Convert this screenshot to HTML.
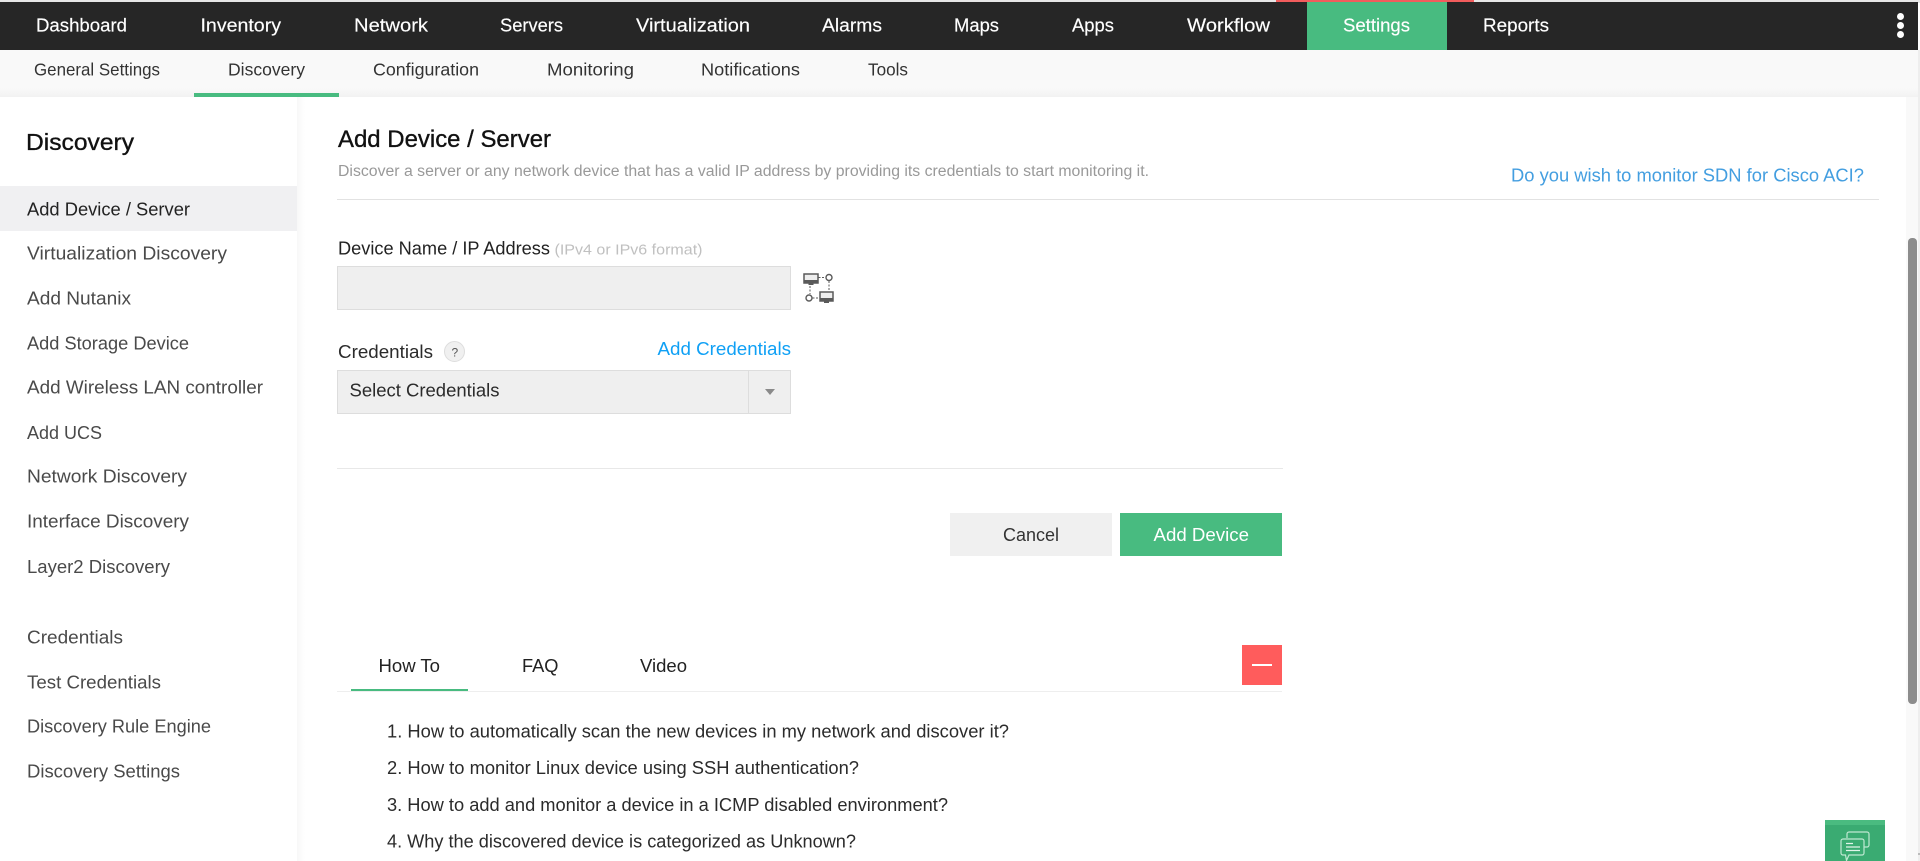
<!DOCTYPE html>
<html lang="en">
<head>
<meta charset="utf-8">
<title>Add Device / Server</title>
<style>
html,body{margin:0;padding:0;width:1920px;height:861px;overflow:hidden;background:#fff;font-family:"Liberation Sans",sans-serif}
.b{position:absolute;box-sizing:border-box}
svg.t{position:absolute;left:0;top:0;z-index:5}
svg.t text{font-family:"Liberation Sans",sans-serif}
.top text{font-size:18px;fill:#fff;stroke:#fff;stroke-width:.15px}
.sub text{font-size:17.5px;fill:#333}
.side text{font-size:18px;fill:#4a4a4a}
.list text{font-size:18px;fill:#2b2b2b}
</style>
</head>
<body>
<!-- top bar -->
<div class="b" style="left:0;top:0;width:1920px;height:3px;background:#e6e6e6"></div>
<div class="b" style="left:1276px;top:0;width:198px;height:3px;background:#f25c5c"></div>
<div class="b" style="left:0;top:2px;width:1918px;height:48px;background:#262626"></div>
<div class="b" style="left:1307px;top:2px;width:140px;height:48px;background:#48bb80"></div>
<div class="b" style="left:1896.5px;top:12.5px;width:7px;height:7px;border-radius:50%;background:#fff"></div>
<div class="b" style="left:1896.5px;top:21.5px;width:7px;height:7px;border-radius:50%;background:#fff"></div>
<div class="b" style="left:1896.5px;top:30.5px;width:7px;height:7px;border-radius:50%;background:#fff"></div>
<!-- sub nav -->
<div class="b" style="left:0;top:50px;width:1918px;height:47px;background:linear-gradient(#f9f9f9 0,#f9f9f9 38px,#f2f2f2 47px)"></div>
<div class="b" style="left:194px;top:93px;width:145px;height:4px;background:#48bb80"></div>
<!-- sidebar -->
<div class="b" style="left:297px;top:97px;width:8px;height:764px;background:linear-gradient(90deg,#f8f8f8,#fff)"></div>
<div class="b" style="left:0;top:186px;width:297px;height:45px;background:#f0f0f2"></div>
<!-- header rule -->
<div class="b" style="left:337px;top:199px;width:1542px;height:1px;background:#e2e2e2"></div>
<!-- device input -->
<div class="b" style="left:337px;top:266px;width:454px;height:44px;background:#efefef;border:1px solid #dddddd"></div>
<!-- select -->
<div class="b" style="left:337px;top:370px;width:454px;height:44px;background:#efefef;border:1px solid #dddddd"></div>
<div class="b" style="left:748px;top:370px;width:1px;height:44px;background:#dddddd"></div>
<div class="b" style="left:765px;top:389px;width:0;height:0;border-left:5.5px solid transparent;border-right:5.5px solid transparent;border-top:6px solid #8a8a8a"></div>
<!-- help circle -->
<div class="b" style="left:444px;top:341px;width:21px;height:21px;border-radius:50%;background:#f0f0f0;border:1px solid #dddddd"></div>
<!-- divider + buttons -->
<div class="b" style="left:337px;top:468px;width:946px;height:1px;background:#e8e8e8"></div>
<div class="b" style="left:950px;top:513px;width:162px;height:43px;background:#f0f0f0"></div>
<div class="b" style="left:1119.5px;top:513px;width:162.5px;height:43px;background:#48bb80"></div>
<!-- tabs -->
<div class="b" style="left:337px;top:691px;width:945px;height:1px;background:#eeeeee"></div>
<div class="b" style="left:351px;top:689px;width:117px;height:2px;background:#48bb80"></div>
<div class="b" style="left:1242px;top:645px;width:40px;height:40px;background:#ff5c5c"></div>
<div class="b" style="left:1252px;top:664px;width:20px;height:2px;background:#fff"></div>
<!-- scrollbar -->
<div class="b" style="left:1906px;top:97px;width:12px;height:764px;background:#f9f9f9"></div>
<div class="b" style="left:1918px;top:50px;width:2px;height:811px;background:#eeeeee"></div>
<div class="b" style="left:1908px;top:238px;width:9px;height:466px;border-radius:4px;background:#8c8c8c"></div>
<div class="b" style="left:1918px;top:853px;width:2px;height:2px;background:#bbbbbb"></div>
<!-- chat button -->
<div class="b" style="left:1825px;top:820px;width:60px;height:41px;background:#3aab72"></div>
<div class="b" style="left:1825px;top:820px;width:60px;height:5px;background:#4abb80"></div>

<svg class="t" width="1920" height="861" viewBox="0 0 1920 861" xmlns="http://www.w3.org/2000/svg">
  <g class="top">
    <text x="36" y="31.500" textLength="91" lengthAdjust="spacingAndGlyphs">Dashboard</text>
    <text x="200.500" y="31.500" textLength="80.500" lengthAdjust="spacingAndGlyphs">Inventory</text>
    <text x="354" y="31.500" textLength="74" lengthAdjust="spacingAndGlyphs">Network</text>
    <text x="500" y="31.500" textLength="63" lengthAdjust="spacingAndGlyphs">Servers</text>
    <text x="636" y="31.500" textLength="114" lengthAdjust="spacingAndGlyphs">Virtualization</text>
    <text x="822" y="31.500" textLength="60" lengthAdjust="spacingAndGlyphs">Alarms</text>
    <text x="954" y="31.500" textLength="45" lengthAdjust="spacingAndGlyphs">Maps</text>
    <text x="1072" y="31.500" textLength="42" lengthAdjust="spacingAndGlyphs">Apps</text>
    <text x="1187" y="31.500" textLength="83" lengthAdjust="spacingAndGlyphs">Workflow</text>
    <text x="1343" y="31.500" textLength="67" lengthAdjust="spacingAndGlyphs">Settings</text>
    <text x="1483" y="31.500" textLength="66" lengthAdjust="spacingAndGlyphs">Reports</text>
  </g>
  <g class="sub">
    <text x="34" y="75.500" textLength="126" lengthAdjust="spacingAndGlyphs">General Settings</text>
    <text x="228" y="75.500" textLength="77" lengthAdjust="spacingAndGlyphs">Discovery</text>
    <text x="373" y="75.500" textLength="106" lengthAdjust="spacingAndGlyphs">Configuration</text>
    <text x="547" y="75.500" textLength="87" lengthAdjust="spacingAndGlyphs">Monitoring</text>
    <text x="701" y="75.500" textLength="99" lengthAdjust="spacingAndGlyphs">Notifications</text>
    <text x="868" y="75.500" textLength="40" lengthAdjust="spacingAndGlyphs">Tools</text>
  </g>
  <text x="26" y="150" font-size="23" fill="#111" stroke="#111" stroke-width=".35" textLength="108" lengthAdjust="spacingAndGlyphs">Discovery</text>
  <g class="side">
    <text x="27" y="215.500" style="fill:#222" textLength="163" lengthAdjust="spacingAndGlyphs">Add Device / Server</text>
    <text x="27" y="259.500" textLength="200" lengthAdjust="spacingAndGlyphs">Virtualization Discovery</text>
    <text x="27" y="304.500" textLength="104" lengthAdjust="spacingAndGlyphs">Add Nutanix</text>
    <text x="27" y="349.500" textLength="162" lengthAdjust="spacingAndGlyphs">Add Storage Device</text>
    <text x="27" y="393.500" textLength="236" lengthAdjust="spacingAndGlyphs">Add Wireless LAN controller</text>
    <text x="27" y="439" textLength="75" lengthAdjust="spacingAndGlyphs">Add UCS</text>
    <text x="27" y="482.500" textLength="160" lengthAdjust="spacingAndGlyphs">Network Discovery</text>
    <text x="27" y="527.500" textLength="162" lengthAdjust="spacingAndGlyphs">Interface Discovery</text>
    <text x="27" y="573" textLength="143" lengthAdjust="spacingAndGlyphs">Layer2 Discovery</text>
    <text x="27" y="643.500" textLength="96" lengthAdjust="spacingAndGlyphs">Credentials</text>
    <text x="27" y="688.500" textLength="134" lengthAdjust="spacingAndGlyphs">Test Credentials</text>
    <text x="27" y="732.500" textLength="184" lengthAdjust="spacingAndGlyphs">Discovery Rule Engine</text>
    <text x="27" y="777.500" textLength="153" lengthAdjust="spacingAndGlyphs">Discovery Settings</text>
  </g>
  <text x="338" y="147" font-size="24" fill="#111" stroke="#111" stroke-width=".35" textLength="213" lengthAdjust="spacingAndGlyphs">Add Device / Server</text>
  <text x="338" y="176" font-size="15.500" fill="#999" textLength="811" lengthAdjust="spacingAndGlyphs">Discover a server or any network device that has a valid IP address by providing its credentials to start monitoring it.</text>
  <text x="1511" y="181.500" font-size="18.500" fill="#439ee0" textLength="353" lengthAdjust="spacingAndGlyphs">Do you wish to monitor SDN for Cisco ACI?</text>
  <text x="338" y="254.500" font-size="18" fill="#222" textLength="212" lengthAdjust="spacingAndGlyphs">Device Name / IP Address</text>
  <text x="554.500" y="254.500" font-size="15" fill="#c0c0c0" textLength="148" lengthAdjust="spacingAndGlyphs">(IPv4 or IPv6 format)</text>
  <text x="338" y="358" font-size="18" fill="#2b2b2b" textLength="95" lengthAdjust="spacingAndGlyphs">Credentials</text>
  <text x="451.500" y="356.500" font-size="12" fill="#555">?</text>
  <text x="657.500" y="355" font-size="18" fill="#0fa0f5" textLength="133.500" lengthAdjust="spacingAndGlyphs">Add Credentials</text>
  <text x="349.500" y="396.500" font-size="18" fill="#2b2b2b" textLength="150" lengthAdjust="spacingAndGlyphs">Select Credentials</text>
  <text x="1003" y="541" font-size="18" fill="#333" textLength="56" lengthAdjust="spacingAndGlyphs">Cancel</text>
  <text x="1153.500" y="541" font-size="18" fill="#fff" textLength="95.500" lengthAdjust="spacingAndGlyphs">Add Device</text>
  <text x="378.500" y="672" font-size="18" fill="#222" textLength="61.500" lengthAdjust="spacingAndGlyphs">How To</text>
  <text x="522" y="672" font-size="18" fill="#222" textLength="36.500" lengthAdjust="spacingAndGlyphs">FAQ</text>
  <text x="640" y="672" font-size="18" fill="#222" textLength="47" lengthAdjust="spacingAndGlyphs">Video</text>
  <g class="list">
    <text x="387" y="737.500" textLength="622" lengthAdjust="spacingAndGlyphs">1. How to automatically scan the new devices in my network and discover it?</text>
    <text x="387" y="774" textLength="472" lengthAdjust="spacingAndGlyphs">2. How to monitor Linux device using SSH authentication?</text>
    <text x="387" y="811" textLength="561" lengthAdjust="spacingAndGlyphs">3. How to add and monitor a device in a ICMP disabled environment?</text>
    <text x="387" y="847.500" textLength="469" lengthAdjust="spacingAndGlyphs">4. Why the discovered device is categorized as Unknown?</text>
  </g>
  <!-- topology icon -->
  <g fill="none" stroke="#5a5a5a">
    <rect x="804" y="274" width="14" height="9" fill="#eee" stroke-width="1.500"/>
    <rect x="804" y="280" width="14" height="3" fill="#5a5a5a" stroke="none"/>
    <rect x="808.500" y="283" width="5" height="2" fill="#5a5a5a" stroke="none"/>
    <circle cx="829" cy="277.500" r="3" stroke-width="1.400"/>
    <path d="M818.500 277.500h7M829 281v10M810 286v8M812.500 298h6" stroke-dasharray="2 1.500" stroke-width="1"/>
    <circle cx="809" cy="298" r="3" stroke-width="1.400"/>
    <rect x="820" y="292" width="13" height="9" fill="#eee" stroke-width="1.500"/>
    <rect x="820" y="298" width="13" height="3" fill="#5a5a5a" stroke="none"/>
    <rect x="824" y="301" width="5" height="2" fill="#5a5a5a" stroke="none"/>
  </g>
  <!-- chat icon -->
  <g fill="none" stroke="#bfe8d2" stroke-width="1.200">
    <path d="M1847 838v-4a2 2 0 0 1 2-2h18a2 2 0 0 1 2 2v11a2 2 0 0 1-2 2h-3"/>
    <path d="M1843 839h19a2 2 0 0 1 2 2v12a2 2 0 0 1-2 2h-13l-2.500 5.500-1-5.500h-2.500a2 2 0 0 1-2-2v-12a2 2 0 0 1 2-2z"/>
    <path d="M1846 843.500h7M1846 847h14M1846 850.500h14" stroke="#e0f4e9" stroke-width="1.300"/>
  </g>
</svg>
</body>
</html>
